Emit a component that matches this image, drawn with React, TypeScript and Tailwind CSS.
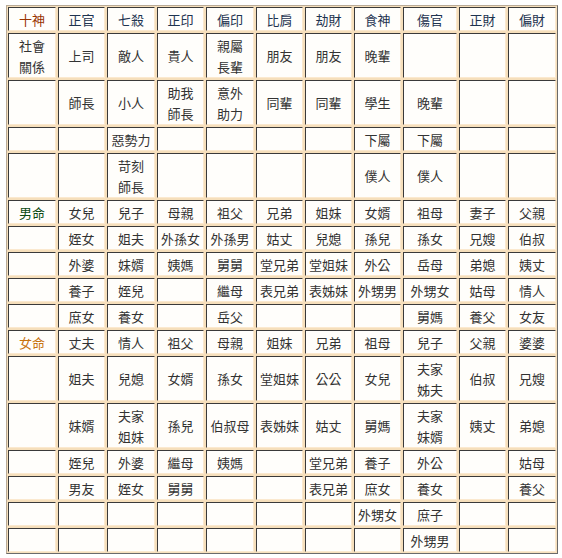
const rows: string[][] = [
  ['十神', '正官', '七殺', '正印', '偏印', '比肩', '劫財', '食神', '傷官', '正財', '偏財'],
  ['社會\n關係', '上司', '敵人', '貴人', '親屬\n長輩', '朋友', '朋友', '晚輩', '', '', ''],
  ['', '師長', '小人', '助我\n師長', '意外\n助力', '同輩', '同輩', '學生', '晚輩', '', ''],
  ['', '', '惡勢力', '', '', '', '', '下屬', '下屬', '', ''],
  ['', '', '苛刻\n師長', '', '', '', '', '僕人', '僕人', '', ''],
  ['男命', '女兒', '兒子', '母親', '祖父', '兄弟', '姐妹', '女婿', '祖母', '妻子', '父親'],
  ['', '姪女', '姐夫', '外孫女', '外孫男', '姑丈', '兒媳', '孫兒', '孫女', '兄嫂', '伯叔'],
  ['', '外婆', '妹婿', '姨媽', '舅舅', '堂兄弟', '堂姐妹', '外公', '岳母', '弟媳', '姨丈'],
  ['', '養子', '姪兒', '', '繼母', '表兄弟', '表姊妹', '外甥男', '外甥女', '姑母', '情人'],
  ['', '庶女', '養女', '', '岳父', '', '', '', '舅媽', '養父', '女友'],
  ['女命', '丈夫', '情人', '祖父', '母親', '姐妹', '兄弟', '祖母', '兒子', '父親', '婆婆'],
  ['', '姐夫', '兒媳', '女婿', '孫女', '堂姐妹', '公公', '女兒', '夫家\n姊夫', '伯叔', '兄嫂'],
  ['', '妹婿', '夫家\n姐妹', '孫兒', '伯叔母', '表姊妹', '姑丈', '舅媽', '夫家\n妹婿', '姨丈', '弟媳'],
  ['', '姪兒', '外婆', '繼母', '姨媽', '', '堂兄弟', '養子', '外公', '', '姑母'],
  ['', '男友', '姪女', '舅舅', '', '', '表兄弟', '庶女', '養女', '', '養父'],
  ['', '', '', '', '', '', '', '外甥女', '庶子', '', ''],
  ['', '', '', '', '', '', '', '', '外甥男', '', ''],
]

// colour of a cell's text, by row and column
function textColor(r: number, c: number) {
  if (r === 0) return c === 0 ? 'text-[#993300]' : 'text-[#1e3350]'
  if (r === 5 && c === 0) return 'text-[#0b4a12]'
  if (r === 10 && c === 0) return 'text-[#c8730f]'
  return 'text-[#333333]'
}

export default function App() {
  return (
    <div className="min-h-screen bg-white pl-[6px] pt-[5px]">
      <div
        className="grid w-[552px] gap-[2px] border border-t-[#b9ab98] border-l-[#b9ab98] border-r-[#6a6a6a] border-b-[#6a6a6a] bg-[#f6dfbb] p-[1px] text-[13px] leading-[21px]"
        style={{
          fontFamily: '"Noto Sans CJK TC", "Noto Sans CJK SC", sans-serif',
        }}
      >
        <div className="grid grid-cols-[48px_47px_48px_47px_48px_47px_47px_47px_54px_47px_48px] grid-rows-[24px_45px_45px_24px_45px_24px_24px_24px_24px_24px_24px_45px_45px_24px_24px_24px_24px] gap-[2px]">
          {rows.map((row, r) =>
            row.map((txt, c) => (
              <div
                key={`${r}-${c}`}
                className={`flex flex-col items-center justify-center whitespace-nowrap border border-t-[#3a3a3a] border-l-[#3a3a3a] border-r-[#fbe9cf] border-b-[#fbe9cf] bg-[#fffefb] text-center ${textColor(r, c)}`}
              >
                {txt.split('\n').map((line, i) => (
                  <span key={i}>{line}</span>
                ))}
              </div>
            )),
          )}
        </div>
      </div>
    </div>
  )
}
